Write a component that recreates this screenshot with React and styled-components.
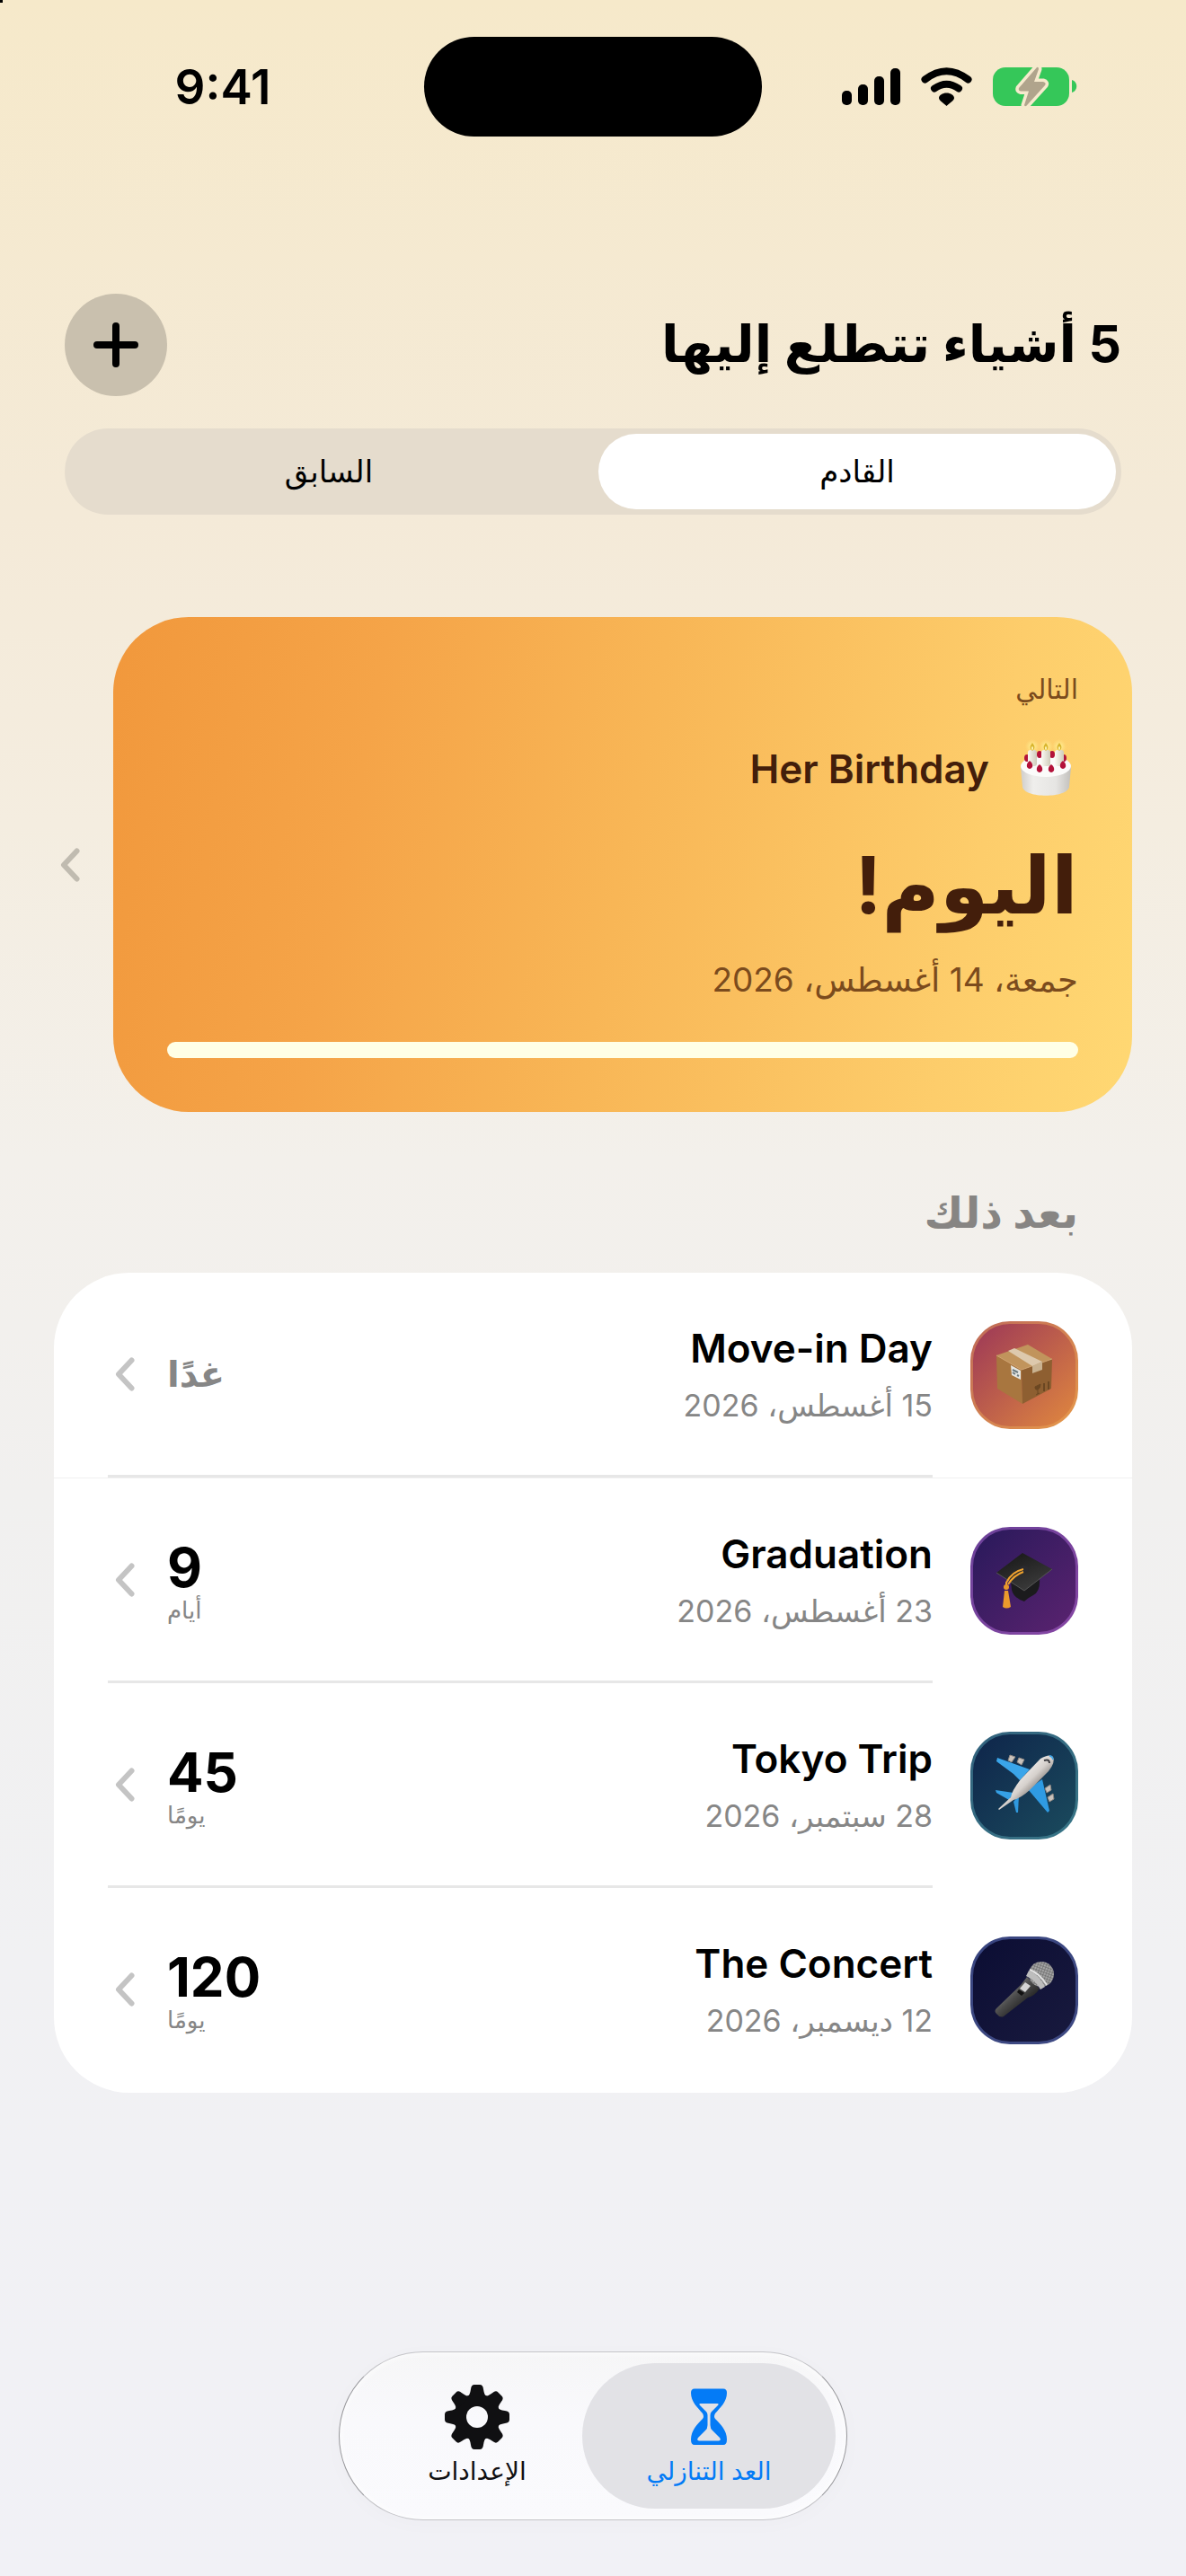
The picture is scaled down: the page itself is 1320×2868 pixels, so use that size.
import React, { useState } from "react";
import styled, { createGlobalStyle, css } from "styled-components";

const GlobalStyle = createGlobalStyle`
  *, *::before, *::after { box-sizing: border-box; }
  body {
    margin: 0;
    background: #f2f2f7;
    color: #000;
    font-family: Inter, "DejaVu Sans", sans-serif;
  }
  h1, h2, h3, p, ul { margin: 0; padding: 0; font-size: inherit; font-weight: inherit; }
  button {
    border: 0;
    padding: 0;
    margin: 0;
    background: none;
    color: inherit;
    font: inherit;
    cursor: pointer;
  }
  svg { display: block; flex: none; }
`;

const Screen = styled.div`
  min-height: 100vh;
  display: flex;
  flex-direction: column;
  background:
    linear-gradient(#000, #000) 0 0 / 3px 3px no-repeat,
    linear-gradient(180deg, #f6e9ca 0%, #f4ead8 20%, #f4ede0 32%, #f3f0eb 45%, #f1f0ef 58%, #f1f1f3 76%, #f1f1f6 100%);
`;

const StatusBar = styled.header`
  display: grid;
  grid-template-columns: 1fr 376px 1fr;
  align-items: center;
  height: 152px;
  padding-top: 41px;
`;

const Clock = styled.time`
  padding-left: 24px;
  text-align: center;
  font-size: 53px;
  font-weight: 600;
  line-height: 64px;
`;

const Island = styled.div`
  height: 111px;
  border-radius: 56px;
  background: #000;
`;

const StatusIcons = styled.div`
  display: flex;
  justify-content: center;
  align-items: center;
  gap: 23px;
  padding-right: 32px;
`;

const Content = styled.main`
  flex: 1;
  display: flex;
  flex-direction: column;
`;

const TitleBar = styled.div`
  display: flex;
  align-items: flex-start;
  justify-content: space-between;
  margin: 175px 72px 36px;
`;

const PageTitle = styled.h1`
  font-size: 57px;
  font-weight: 700;
  line-height: 112px;
`;

const AddButton = styled.button`
  display: grid;
  place-items: center;
  width: 114px;
  height: 114px;
  border-radius: 50%;
  background: #c9c0ae;
`;

const Segmented = styled.div`
  display: flex;
  gap: 12px;
  height: 96px;
  margin: 0 72px;
  padding: 6px;
  border-radius: 48px;
  background: #e5dccd;
`;

const Segment = styled.button`
  flex: 1;
  border-radius: 42px;
  font-size: 34px;
  font-weight: 500;
  line-height: 48px;
  background: ${(p) => (p.$active ? "#fff" : "transparent")};
`;

const Hero = styled.section`
  display: flex;
  align-items: center;
  gap: 30px;
  margin: 114px 60px 0;
`;

const HeroCard = styled.article`
  flex: 1;
  padding: 60px;
  border-radius: 84px;
  color: #431e0b;
  background: linear-gradient(281deg, #ffd873 0%, #fdcd6b 18%, #f8b656 50%, #f5a448 75%, #f1983c 100%);
`;

const Eyebrow = styled.p`
  font-size: 30px;
  font-weight: 500;
  line-height: 40px;
  color: #7b4b1d;
`;

const HeroName = styled.div`
  display: flex;
  align-items: center;
  gap: 27px;
  margin-top: 33px;
  font-size: 44px;
  font-weight: 600;
  line-height: 60px;
`;

const HeroCount = styled.p`
  margin-top: 21px;
  font-size: 88px;
  font-weight: 700;
  line-height: 144px;
`;

const HeroDate = styled.p`
  margin-top: 10px;
  font-size: 37px;
  line-height: 48px;
  color: #7b4b1d;
`;

const Progress = styled.div`
  height: 18px;
  margin-top: 45px;
  border-radius: 9px;
  background: #ffffe6;
`;

const PagerButton = styled.button`
  display: grid;
  place-items: center;
  width: 36px;
  height: 66px;
`;

const SectionTitle = styled.h2`
  margin: 74px 120px 29px;
  font-size: 48px;
  font-weight: 700;
  line-height: 76px;
  color: #878583;
`;

const List = styled.ul`
  margin: 0 60px 120px;
  border-radius: 84px;
  background: #fff;
  list-style: none;
  overflow: hidden;
`;

const Row = styled.li`
  display: flex;
  align-items: center;
  gap: 42px;
  padding: 0 60px;
  &:first-child { border-bottom: 1px solid #f0f0f0; }
  &:last-child > :last-child { border-color: transparent; }
`;

const Tile = styled.div`
  flex: none;
  width: 120px;
  height: 120px;
  border: 3px solid ${(p) => p.$rim};
  border-radius: 44px;
  background: linear-gradient(135deg, ${(p) => p.$from}, ${(p) => p.$to}) border-box;
  svg { margin: -3px; }
`;

const RowBody = styled.div`
  flex: 1;
  display: flex;
  align-items: center;
  height: 228px;
  padding-left: 8px;
  border-bottom: 3px solid #e7e7e7;
`;

const RowText = styled.div`
  flex: 1;
  display: grid;
  gap: 10px;
`;

const RowTitle = styled.h3`
  font-size: 44px;
  font-weight: 600;
  line-height: 60px;
`;

const RowDate = styled.p`
  font-size: 34px;
  line-height: 48px;
  color: #868686;
`;

const Count = styled.div`
  display: flex;
  flex-direction: column;
  align-items: flex-end;
  margin-left: 36px;
`;

const CountValue = styled.strong`
  padding-top: 8px;
  font-size: 60px;
  font-weight: 700;
  line-height: 60px;
`;

const CountUnit = styled.span`
  font-size: 26px;
  font-weight: 500;
  line-height: 36px;
  color: #868686;
`;

const CountWord = styled.strong`
  font-size: 40px;
  font-weight: 600;
  line-height: 60px;
  color: #868686;
`;

const TabBar = styled.nav`
  align-self: center;
  display: flex;
  margin-bottom: 62px;
  padding: 12px;
  border: 1px solid #c4c4c8;
  border-inline-color: #96969a;
  border-radius: 94px;
  background: linear-gradient(180deg, #f6f6f7, #f9f9fc 40%, #fafafd);
  box-shadow: inset 0 0 8px #fff, 0 4px 24px rgba(0, 0, 0, 0.02);
`;

const activeTab = css`
  background: #e2e2e6;
  color: #047bf6;
`;

const Tab = styled.button`
  display: flex;
  flex-direction: column;
  align-items: center;
  gap: 6px;
  width: 282px;
  padding: 24px 0;
  border-radius: 81px;
  font-size: 28px;
  font-weight: 500;
  line-height: 36px;
  color: #101012;
  ${(p) => p.$active && activeTab}
  & + & { margin-inline-start: -24px; }
`;

const SignalIcon = () => (
  <svg width="65" height="42" viewBox="0 0 65 42" aria-hidden="true">
    <rect x="0" y="25" width="11" height="16" rx="5" />
    <rect x="18" y="18" width="11" height="23" rx="5" />
    <rect x="36" y="9" width="11" height="32" rx="5" />
    <rect x="54" y="0" width="11" height="41" rx="5" />
  </svg>
);

const WifiIcon = () => (
  <svg width="57" height="43" viewBox="0 0 57 43" aria-hidden="true">
    <g fill="none" stroke="#000" strokeWidth="8" strokeLinecap="round">
      <path d="M4.500 13.500Q28.500 -5 52.500 13.500" />
      <path d="M15 23.500Q28.500 14 42 23.500" />
    </g>
    <path d="M28.500 28.500C33 28.500 37 31 37 34C37 36.500 33 39 28.500 43C24 39 20 36.500 20 34C20 31 24 28.500 28.500 28.500Z" />
  </svg>
);

const BatteryIcon = () => (
  <svg width="94" height="46" viewBox="0 0 94 46" aria-hidden="true">
    <rect x="0" y="1" width="85" height="43" rx="14" fill="#35c759" />
    <path d="M88 15C95 17 95 27 88 29Z" fill="#35c759" />
    <path d="M49 1L29 24Q28 27 31 27.500H40L35 43Q36 46 39 42L58 21Q60 18 56 17H46L51 3Q51 0 49 1Z" fill="#b0a48c" stroke="#f6e9cd" strokeWidth="7" strokeLinejoin="round" paintOrder="stroke" />
  </svg>
);

const PlusIcon = () => (
  <svg width="52" height="52" viewBox="0 0 52 52" aria-hidden="true">
    <path d="M26 5V47M5 26H47" stroke="#000" strokeWidth="8" strokeLinecap="round" />
  </svg>
);

const Chevron = ({ color }) => (
  <svg width="22" height="42" viewBox="0 0 22 42" aria-hidden="true">
    <path d="M18.500 5.500L4 21L18.500 36.500" fill="none" stroke={color} strokeWidth="6" strokeLinecap="round" strokeLinejoin="round" />
  </svg>
);

const GearIcon = () => (
  <svg width="72" height="72" viewBox="0 0 72 72" fill="#101012" aria-hidden="true">
    <mask id="gear-hole">
      <rect width="72" height="72" fill="#fff" />
      <circle cx="36" cy="36" r="12" fill="#000" />
    </mask>
    <g mask="url(#gear-hole)">
      <circle cx="36" cy="36" r="26" />
      {[0, 45, 90, 135, 180, 225, 270, 315].map((a) => (
        <path key={a} transform={`rotate(${a} 36 36)`} d="M25 14Q28 12 29 5Q29.500 0 33 0H39Q42.500 0 43 5Q44 12 47 14Z" />
      ))}
    </g>
  </svg>
);

const HourglassIcon = () => (
  <svg width="40" height="72" viewBox="0 0 40 72" aria-hidden="true">
    <path
      fill="#047bf6"
      fillRule="evenodd"
      d="M4 4.500H36Q40 4.500 40 9C40 19 33 25 27 32Q25 35.500 27 38C33 44 40 51 40 61Q40 67 36 67H4Q0 67 0 61C0 51 7 44 13 38Q15 35.500 13 32C7 25 0 19 0 9Q0 4.500 4 4.500ZM10.500 21Q8.500 21.500 10 23L17 30Q18.500 31.500 18.500 34V45Q18.500 49 16 51L8 59Q6 62 9 62.500H31Q34 62 32 59L24 51Q21.500 49 21.500 45V34Q21.500 31.500 23 30L30 23Q31.500 21.500 29.500 21Z"
    />
  </svg>
);

const CakeIcon = () => (
  <svg width="72" height="72" viewBox="6 5 72 72" aria-hidden="true">
    <defs>
      <linearGradient id="cake-side" x2="1" y2="0">
        <stop offset="0" stopColor="#cfcdca" />
        <stop offset="0.25" stopColor="#efeeec" />
        <stop offset="0.7" stopColor="#e6e5e3" />
        <stop offset="1" stopColor="#c2c0bc" />
      </linearGradient>
      <linearGradient id="candle" x2="1" y2="0">
        <stop offset="0" stopColor="#fbfaf3" />
        <stop offset="1" stopColor="#cfccbb" />
      </linearGradient>
      <radialGradient id="glow">
        <stop offset="0" stopColor="#fff49a" />
        <stop offset="1" stopColor="#ffe98a" stopOpacity="0" />
      </radialGradient>
    </defs>
    <path d="M14 39C14 25 70 25 70 39L68 61C66 74 18 74 16 61Z" fill="url(#cake-side)" />
    <ellipse cx="42" cy="38" rx="28" ry="12" fill="#fbfbfa" />
    {[[21, 29], [35, 25], [49, 25], [62, 29]].map(([x, y]) => (
      <ellipse key={x} cx={x} cy={y} rx="3" ry="4" fill="#b3123a" />
    ))}
    {[27, 42, 57].map((x) => (
      <g key={x}>
        <circle cx={x} cy="16" r="8" fill="url(#glow)" />
        <rect x={x - 5} y="20" width="10" height="18" rx="3" fill="url(#candle)" />
        <path d={`M${x} 12Q${x + 5} 18 ${x} 21Q${x - 5} 18 ${x} 12Z`} fill="#d9b52e" />
        <ellipse cx={x} cy="18" rx="1" ry="2" fill="#fff6b8" />
      </g>
    ))}
    {[[24, 37], [35, 41], [48, 41], [61, 37]].map(([x, y]) => (
      <path key={x} d={`M${x} ${y - 5}Q${x + 4} ${y - 2} ${x + 3} ${y + 2}Q${x} ${y + 6} ${x - 3} ${y + 2}Q${x - 4} ${y - 2} ${x} ${y - 5}Z`} fill="#b3123a" />
    ))}
  </svg>
);

const BoxIcon = () => (
  <svg width="120" height="120" viewBox="0 0 120 120" aria-hidden="true">
    <path d="M29 38L64 26L91 42L57 54Z" fill="#c1945c" />
    <path d="M29 38L57 54L58 92L30 75Z" fill="#a8763f" />
    <path d="M91 42L57 54L58 92L90 75Z" fill="#8e5f31" />
    <path d="M29 38L57 54L91 42" fill="none" stroke="#d0a673" strokeWidth="1" />
    <path d="M42 33L49 30L80 45L69 50Z" fill="#ddc9ad" />
    <path d="M69 50L80 45V54L69 58Z" fill="#c9b290" />
    <path d="M45 49L56 55V65L46 60Z" fill="#e6e6e2" />
    <path d="M47 54L53 57M47 57L50 59M52 60L54 61" stroke="#6c7a80" strokeWidth="2" />
    <path d="M72 73L78 70Q78 75 75 76Q72 77 72 73ZM75 76V81M73 82L77 80" fill="#6b4722" stroke="#6b4722" strokeWidth="1" />
    <path d="M82 69V78M87 67V76" stroke="#6b4722" strokeWidth="2" />
  </svg>
);

const CapIcon = () => (
  <svg width="120" height="120" viewBox="0 0 120 120" aria-hidden="true">
    <defs>
      <linearGradient id="cap-board" x1="0" y1="0" x2="0.6" y2="1">
        <stop offset="0" stopColor="#151515" />
        <stop offset="1" stopColor="#3b3b3b" />
      </linearGradient>
    </defs>
    <path d="M45 60L77 58Q78 72 70 76Q64 79 60 83Q48 79 46 70Z" fill="#1b1b1d" />
    <path d="M58 29L91 47L60 71L29 51Z" fill="url(#cap-board)" />
    <path d="M29 51L60 71L91 47" fill="none" stroke="#555" strokeWidth="1" />
    <ellipse cx="60" cy="47" rx="5" ry="4" fill="#2a2a2e" />
    <path d="M59 47Q46 50 40 62V68M59 50Q48 54 42 64" fill="none" stroke="#f0a32f" strokeWidth="2" />
    <circle cx="40" cy="67" r="3" fill="#e8972a" />
    <path d="M38 71H42L45 89Q40 92 36 89Z" fill="#eb9a2c" />
  </svg>
);

const PlaneIcon = () => (
  <svg width="120" height="120" viewBox="0 0 120 120" aria-hidden="true">
    <defs>
      <linearGradient id="fuselage" x1="0.3" y1="0.3" x2="0.65" y2="0.65">
        <stop offset="0" stopColor="#f6f4f2" />
        <stop offset="0.6" stopColor="#d6d1cd" />
        <stop offset="1" stopColor="#8d8783" />
      </linearGradient>
    </defs>
    <g fill="#c9c2bc" stroke="#8d8782" strokeWidth="1">
      <path d="M44 26L50 28L46 34L42 32ZM54 29L60 31L57 37L52 34Z" />
      <path d="M83 63L89 59L90 65L85 68ZM86 73L92 69L93 75L88 78Z" />
    </g>
    <path d="M30 29L66 42L55 54L48 47L29 33Z" fill="#3aa5ea" />
    <path d="M80 53L88 88L86 90L64 64Z" fill="#2f9be3" />
    <path d="M28 65L48 68L43 76L29 68Z" fill="#35a0e6" />
    <path d="M48 78L54 71L53 90H51Z" fill="#2f98de" />
    <path d="M92 28Q88 24 78 30L56 53Q46 66 45 73L31 86L32 87L48 76Q56 74 66 65L87 44Q95 34 92 28Z" fill="url(#fuselage)" />
    <path d="M88 27Q92 26 92 31Q91 28 88 27Z" fill="#3aa5ea" stroke="#3aa5ea" strokeWidth="1" />
    <path d="M82 32Q88 30 88 35" fill="none" stroke="#3c3c40" strokeWidth="2" />
  </svg>
);

const MicIcon = () => (
  <svg width="120" height="120" viewBox="0 0 120 120" aria-hidden="true">
    <defs>
      <linearGradient id="mic-body" x1="0.25" y1="0.25" x2="0.7" y2="0.7">
        <stop offset="0" stopColor="#7b7b7b" />
        <stop offset="0.5" stopColor="#4a4a4a" />
        <stop offset="1" stopColor="#232323" />
      </linearGradient>
      <pattern id="mic-mesh" width="3" height="3" patternUnits="userSpaceOnUse" patternTransform="rotate(20)">
        <rect width="3" height="3" fill="#a5a5a5" />
        <path d="M0 0H3M0 0V3" stroke="#5b5b5b" strokeWidth="1" />
      </pattern>
    </defs>
    <path d="M63 45L77 58Q72 66 64 68L37 89Q33 91 29 86Q26 83 29 80L56 54Z" fill="url(#mic-body)" />
    <circle cx="79" cy="42" r="14" fill="url(#mic-mesh)" />
    <path d="M65 38Q76 42 83 56L78 59Q73 49 62 44Z" fill="#bdbdbd" />
    <path d="M66 37Q77 41 85 54" fill="none" stroke="#e2e2e2" strokeWidth="2" />
    <path d="M61 51L67 55L61 62L55 58Z" fill="#d5d5d5" />
    <path d="M54 59L60 63L57 66L52 62Z" fill="#111" />
  </svg>
);

const events = [
  { title: "Move-in Day", date: "15 أغسطس، 2026", word: "غدًا", icon: BoxIcon, from: "#9a3558", to: "#e28a3e", rim: "rgba(235, 170, 90, 0.45)" },
  { title: "Graduation", date: "23 أغسطس، 2026", count: "9", unit: "أيام", icon: CapIcon, from: "#27195a", to: "#5c2370", rim: "rgba(175, 105, 215, 0.5)" },
  { title: "Tokyo Trip", date: "28 سبتمبر، 2026", count: "45", unit: "يومًا", icon: PlaneIcon, from: "#0e244a", to: "#1b4c5e", rim: "rgba(85, 160, 175, 0.5)" },
  { title: "The Concert", date: "12 ديسمبر، 2026", count: "120", unit: "يومًا", icon: MicIcon, from: "#0b0d33", to: "#191a3e", rim: "rgba(95, 115, 190, 0.55)" },
];

const EventRow = ({ event }) => {
  const Icon = event.icon;
  return (
    <Row>
      <Tile $from={event.from} $to={event.to} $rim={event.rim}>
        <Icon />
      </Tile>
      <RowBody>
        <RowText>
          <RowTitle>{event.title}</RowTitle>
          <RowDate>{event.date}</RowDate>
        </RowText>
        <Count>
          {event.word ? (
            <CountWord>{event.word}</CountWord>
          ) : (
            <>
              <CountValue>{event.count}</CountValue>
              <CountUnit>{event.unit}</CountUnit>
            </>
          )}
        </Count>
        <Chevron color="#c4c4c4" />
      </RowBody>
    </Row>
  );
};

export default function App() {
  const [segment, setSegment] = useState("next");
  const [tab, setTab] = useState("countdown");
  return (
    <Screen>
      <GlobalStyle />
      <StatusBar>
        <Clock>9:41</Clock>
        <Island />
        <StatusIcons>
          <SignalIcon />
          <WifiIcon />
          <BatteryIcon />
        </StatusIcons>
      </StatusBar>
      <Content dir="rtl" lang="ar">
        <TitleBar>
          <PageTitle>5 أشياء تتطلع إليها</PageTitle>
          <AddButton aria-label="إضافة">
            <PlusIcon />
          </AddButton>
        </TitleBar>
        <Segmented>
          <Segment $active={segment === "next"} onClick={() => setSegment("next")}>القادم</Segment>
          <Segment $active={segment === "past"} onClick={() => setSegment("past")}>السابق</Segment>
        </Segmented>
        <Hero>
          <HeroCard>
            <Eyebrow>التالي</Eyebrow>
            <HeroName>
              <CakeIcon />
              <h2>Her Birthday</h2>
            </HeroName>
            <HeroCount>اليوم!</HeroCount>
            <HeroDate>جمعة، 14 أغسطس، 2026</HeroDate>
            <Progress role="progressbar" aria-valuenow={100} />
          </HeroCard>
          <PagerButton aria-label="التالي">
            <Chevron color="#c0bbb0" />
          </PagerButton>
        </Hero>
        <SectionTitle>بعد ذلك</SectionTitle>
        <List>
          {events.map((event) => (
            <EventRow key={event.title} event={event} />
          ))}
        </List>
      </Content>
      <TabBar dir="rtl" lang="ar">
        <Tab $active={tab === "countdown"} onClick={() => setTab("countdown")}>
          <HourglassIcon />
          العد التنازلي
        </Tab>
        <Tab $active={tab === "settings"} onClick={() => setTab("settings")}>
          <GearIcon />
          الإعدادات
        </Tab>
      </TabBar>
    </Screen>
  );
}
